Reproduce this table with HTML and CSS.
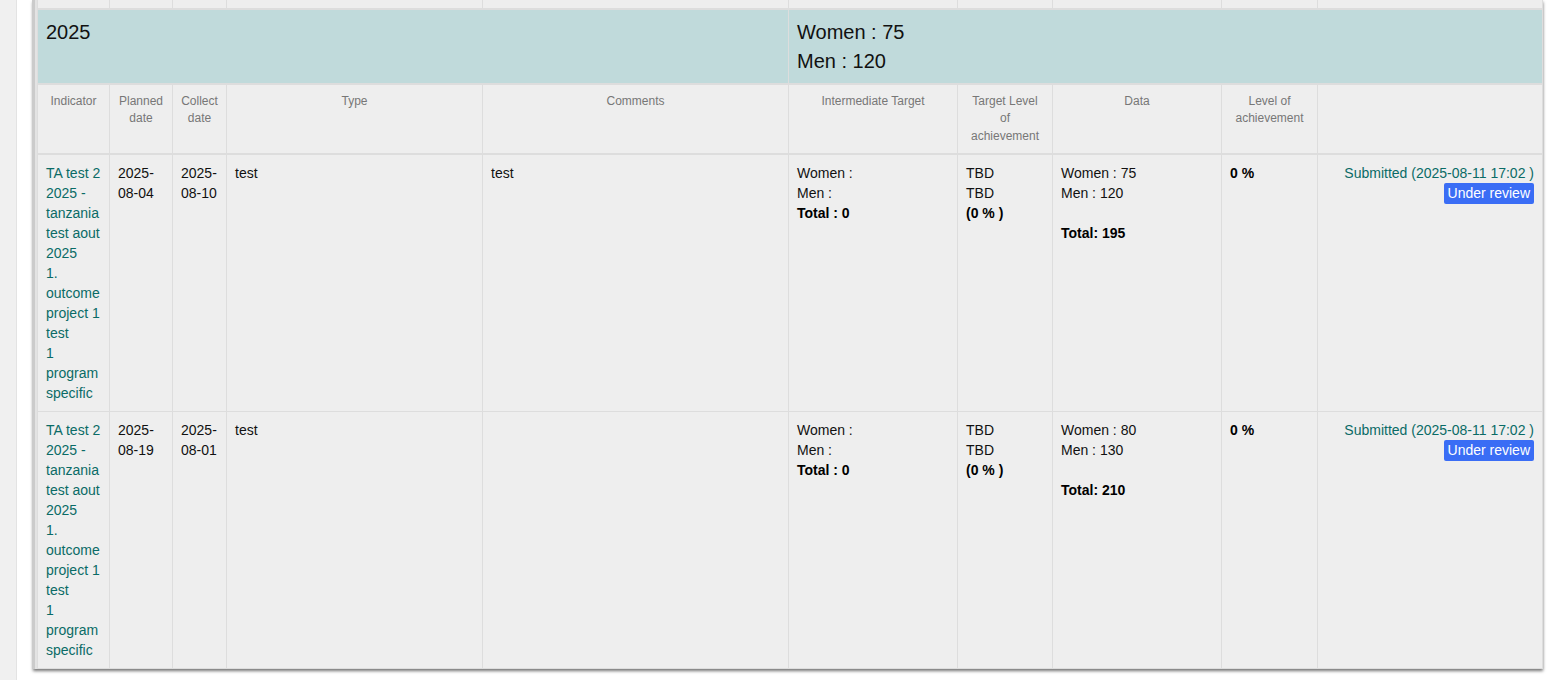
FILE: index.html
```html
<!DOCTYPE html>
<html lang="en">
<head>
<meta charset="utf-8">
<title>Indicators 2025</title>
<link rel="stylesheet" href="styles.css">
</head>
<body>
<aside class="sidebar"></aside>
<main class="main">
  <div class="card">
    <table class="grid">
      <colgroup>
        <col class="c-ind"><col class="c-plan"><col class="c-coll"><col class="c-type"><col class="c-comm">
        <col class="c-int"><col class="c-tlev"><col class="c-data"><col class="c-lev"><col class="c-stat">
      </colgroup>
      <tbody>
        <tr class="prev">
          <td></td><td></td><td></td><td></td><td></td><td></td><td></td><td></td><td></td><td></td>
        </tr>
        <tr class="year">
          <td colspan="5">2025</td>
          <td colspan="5">Women : 75<br>Men : 120</td>
        </tr>
        <tr class="head">
          <th>Indicator</th>
          <th>Planned date</th>
          <th>Collect date</th>
          <th>Type</th>
          <th>Comments</th>
          <th>Intermediate Target</th>
          <th>Target Level of achievement</th>
          <th>Data</th>
          <th>Level of achievement</th>
          <th></th>
        </tr>
        <tr class="row">
          <td class="ind">TA test 2 2025 - tanzania test aout 2025<br>1. outcome project 1 test<br>1 program specific</td>
          <td>2025-08-04</td>
          <td>2025-08-10</td>
          <td>test</td>
          <td>test</td>
          <td>Women :<br>Men :<br><b>Total : 0</b></td>
          <td>TBD<br>TBD<br><b>(0 % )</b></td>
          <td>Women : 75<br>Men : 120<br><br><b>Total: 195</b></td>
          <td><b>0 %</b></td>
          <td class="stat"><span class="submitted">Submitted (2025-08-11 17:02 )</span><br><span class="badge">Under review</span></td>
        </tr>
        <tr class="row">
          <td class="ind">TA test 2 2025 - tanzania test aout 2025<br>1. outcome project 1 test<br>1 program specific</td>
          <td>2025-08-19</td>
          <td>2025-08-01</td>
          <td>test</td>
          <td></td>
          <td>Women :<br>Men :<br><b>Total : 0</b></td>
          <td>TBD<br>TBD<br><b>(0 % )</b></td>
          <td>Women : 80<br>Men : 130<br><br><b>Total: 210</b></td>
          <td><b>0 %</b></td>
          <td class="stat"><span class="submitted">Submitted (2025-08-11 17:02 )</span><br><span class="badge">Under review</span></td>
        </tr>
      </tbody>
    </table>
  </div>
</main>
</body>
</html>
```

FILE: styles.css
```css
* { box-sizing: border-box; }
html, body { margin: 0; height: 100%; }
body {
  font-family: "Liberation Sans", Arial, sans-serif;
  font-size: 14px;
  line-height: 20px;
  color: #111;
  background: #fff;
  display: flex;
  overflow: hidden;
}
.sidebar {
  width: 17px;
  flex: none;
  background: #f0f0f0;
  border-right: 1px solid #e3e3e3;
}
.main {
  flex: 1;
  padding-left: 15px;
}
.card {
  width: 1510px;
  border-left: 3px solid #cbcbcb;
  padding-left: 2px;
  background: #e3e3e3;
  box-shadow: 1px 2px 3px rgba(0, 0, 0, 0.55);
}
.grid {
  width: 1505px;
  table-layout: fixed;
  border-collapse: collapse;
  background: #eeeeee;
}
.c-ind { width: 72px; }
.c-plan { width: 63px; }
.c-coll { width: 54px; }
.c-type { width: 256px; }
.c-comm { width: 306px; }
.c-int { width: 169px; }
.c-tlev { width: 95px; }
.c-data { width: 169px; }
.c-lev { width: 96px; }
.c-stat { width: 225px; }
.grid td, .grid th {
  border: 1px solid #dddddd;
  padding: 8px;
  vertical-align: top;
  text-align: left;
}
.prev td {
  height: 9px;
  padding: 0;
  border-top: 0;
}
.year td {
  background: #c0dadb;
  font-size: 20px;
  line-height: 28.5px;
  color: #111;
  border-top: 2px solid #dddddd;
  border-bottom: 2px solid #dddddd;
  height: 74px;
}
.head th {
  font-size: 12px;
  line-height: 17.4px;
  font-weight: normal;
  color: #777;
  text-align: center;
  border-bottom: 2px solid #dddddd;
  height: 68px;
}
.grid .ind { color: #0a6b66; padding-right: 5px; }
.grid .stat { text-align: right; }
.submitted { color: #0a6b66; }
.badge {
  display: inline-block;
  background: #3a6df5;
  color: #fff;
  padding: 0 4px;
  line-height: 21px;
  border-radius: 2px;
}
b { font-weight: bold; color: #000; }
```
